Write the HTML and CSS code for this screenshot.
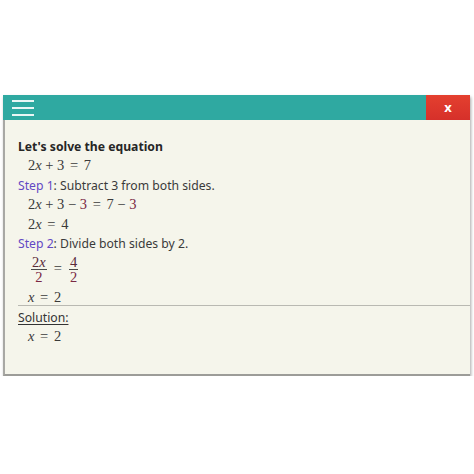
FILE: index.html
```html
<!DOCTYPE html>
<html>
<head>
	<title>Equation Solver</title>
	<meta charset="utf-8">
	<meta name="viewport" content="width=device-width, initial-scale=1">
	<link rel="stylesheet" href="styles.css">
</head>
<body>
	<div class="window">
		<div class="titlebar">
			<div class="menu">
				<span></span>
				<span></span>
				<span></span>
			</div>
			<div class="close">x</div>
		</div>
		<div class="content">
			<div class="title">Let's solve the equation</div>
			<div class="math">2<i>x</i> + 3 <span class="eq">=</span> 7</div>
			<div class="step"><span class="label">Step 1</span>: Subtract 3 from both sides.</div>
			<div class="math">2<i>x</i> + 3 &minus; <span class="hl">3</span> <span class="eq">=</span> 7 &minus; <span class="hl">3</span></div>
			<div class="math">2<i>x</i> <span class="eq">=</span> 4</div>
			<div class="step"><span class="label">Step 2</span>: Divide both sides by 2.</div>
			<div class="math frac-row">
				<span class="frac"><span class="num">2<i>x</i></span><span class="den hl">2</span></span>
				<span class="eq">=</span>
				<span class="frac"><span class="num">4</span><span class="den hl">2</span></span>
			</div>
			<div class="math last"><i>x</i> <span class="eq">=</span> 2</div>
			<hr class="divider">
			<div class="solution">Solution:</div>
			<div class="math"><i>x</i> <span class="eq">=</span> 2</div>
		</div>
	</div>
</body>
</html>
```

FILE: styles.css
```css
body {
	margin: 0;
	background: #ffffff;
	font-family: "Noto Sans", "Open Sans", sans-serif;
}

.window {
	margin: 95px 0 0 3px;
	width: 467px;
	height: 281px;
	background: #f5f5eb;
	border-left: 2px solid #a8a8a4;
	border-bottom: 2px solid #9c9c98;
	box-sizing: border-box;
	box-shadow: 1px 2px 3px rgba(0,0,0,0.35);
	display: flex;
	flex-direction: column;
}

.titlebar {
	height: 25px;
	background: #2fa9a1;
	display: flex;
	justify-content: space-between;
	align-items: stretch;
	margin-left: -2px;
}

.menu {
	display: flex;
	flex-direction: column;
	justify-content: center;
	gap: 5px;
	padding-left: 9px;
}

.menu span {
	display: block;
	width: 22px;
	height: 2px;
	background: #eaf6f5;
}

.close {
	width: 44px;
	background: linear-gradient(#e4402f, #d6302a);
	color: #ffffff;
	font-weight: bold;
	font-size: 13px;
	display: flex;
	align-items: center;
	justify-content: center;
	padding-bottom: 2px;
	box-sizing: border-box;
}

.content {
	padding: 17px 0 0 13px;
	color: #333333;
	font-size: 12.2px;
}

.title {
	font-weight: bold;
	color: #262626;
	height: 19px;
	line-height: 19px;
}

.step {
	height: 19.5px;
	line-height: 19.5px;
	color: #3a3a3a;
}

.label {
	color: #6348c4;
}

.math {
	font-family: "Liberation Serif", "Times New Roman", serif;
	font-size: 14.5px;
	color: #3a3a3a;
	padding-left: 10px;
	height: 19.5px;
	line-height: 19.5px;
}

.math i {
	font-style: italic;
}

.eq {
	margin: 0 2px;
}

.hl {
	color: #7a2844;
}

.frac-row {
	height: 34px;
	display: flex;
	align-items: center;
	padding-left: 13px;
	padding-bottom: 3px;
	box-sizing: border-box;
	gap: 5px;
}

.frac {
	display: inline-flex;
	flex-direction: column;
	align-items: center;
	line-height: 12px;
}

.num {
	border-bottom: 1px solid #4a4a4a;
	padding: 0 1px 1px;
	color: #5a2a3a;
}

.den {
	padding-top: 1px;
}

.last {
	height: 17.5px;
	line-height: 19px;
}

.divider {
	border: none;
	border-top: 1px solid #b9b9b2;
	margin: 0 0 2px;
}

.solution {
	text-decoration: underline;
	text-underline-offset: 2px;
	height: 19px;
	line-height: 19px;
	color: #333333;
}
```
